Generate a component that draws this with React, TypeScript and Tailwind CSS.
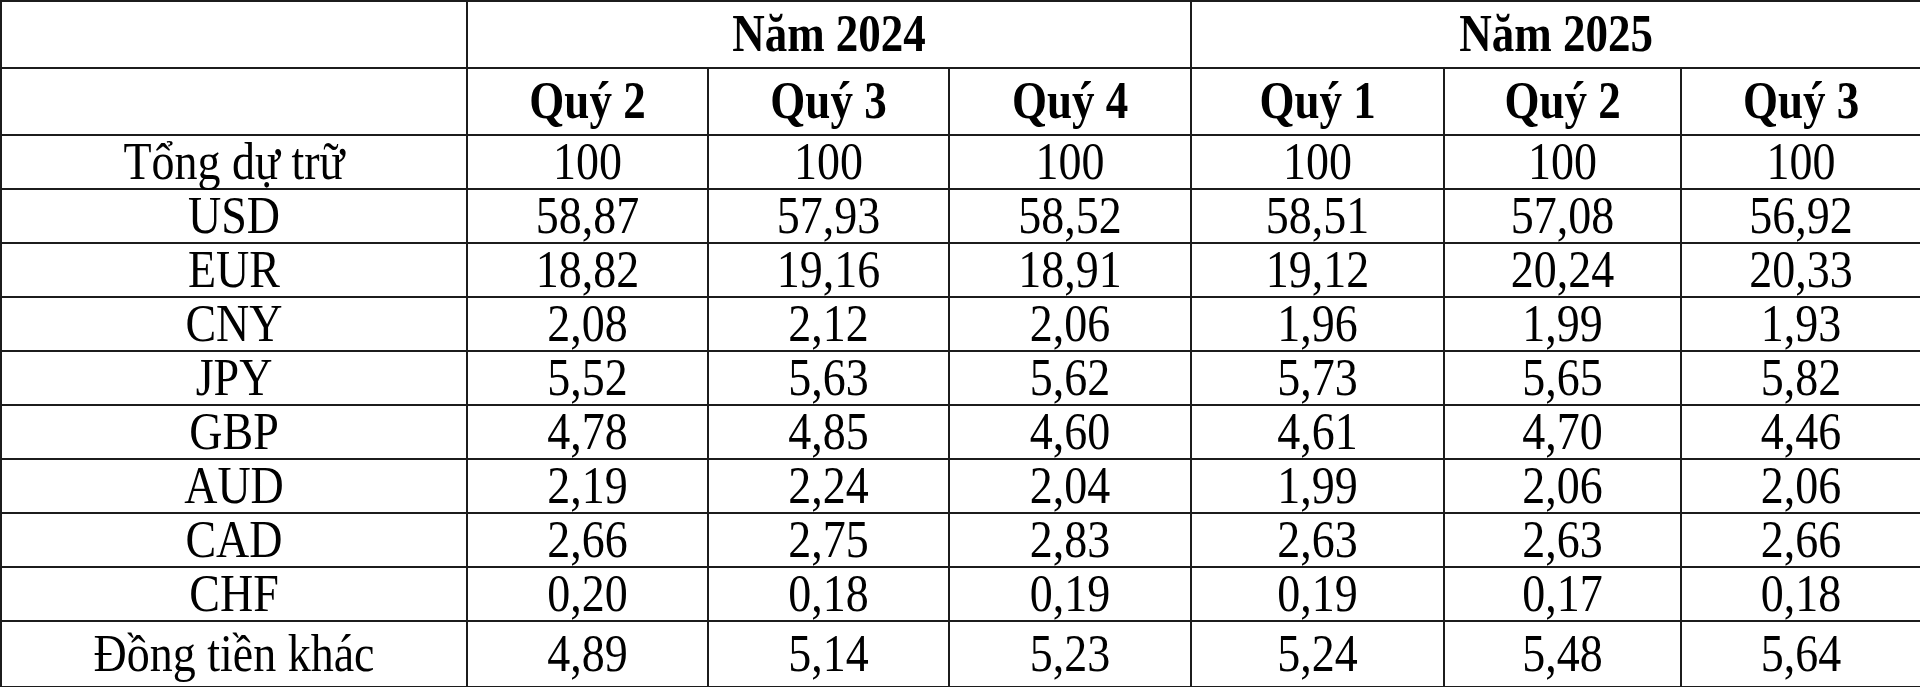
const quarters = [
  { year: "Năm 2024", items: ["Quý 2", "Quý 3", "Quý 4"] },
  { year: "Năm 2025", items: ["Quý 1", "Quý 2", "Quý 3"] },
];

const rows: { label: string; values: string[]; tall?: boolean }[] = [
  { label: "Tổng dự trữ", values: ["100", "100", "100", "100", "100", "100"] },
  { label: "USD", values: ["58,87", "57,93", "58,52", "58,51", "57,08", "56,92"] },
  { label: "EUR", values: ["18,82", "19,16", "18,91", "19,12", "20,24", "20,33"] },
  { label: "CNY", values: ["2,08", "2,12", "2,06", "1,96", "1,99", "1,93"] },
  { label: "JPY", values: ["5,52", "5,63", "5,62", "5,73", "5,65", "5,82"] },
  { label: "GBP", values: ["4,78", "4,85", "4,60", "4,61", "4,70", "4,46"] },
  { label: "AUD", values: ["2,19", "2,24", "2,04", "1,99", "2,06", "2,06"] },
  { label: "CAD", values: ["2,66", "2,75", "2,83", "2,63", "2,63", "2,66"] },
  { label: "CHF", values: ["0,20", "0,18", "0,19", "0,19", "0,17", "0,18"] },
  { label: "Đồng tiền khác", values: ["4,89", "5,14", "5,23", "5,24", "5,48", "5,64"], tall: true },
];

const cell = "border-2 border-[#1c1c1c] text-center p-0 align-middle";
// the source image is a bit stretched vertically
const stretch = "inline-block scale-y-[1.15]";

const App = () => {
  return (
    <div className="w-[1920px] h-[687px] bg-white text-black font-['Liberation_Serif','Times_New_Roman',serif]">
      <table className="w-[1920px] table-fixed border-collapse">
        <colgroup>
          <col className="w-[466px]" />
          <col className="w-[241px]" />
          <col className="w-[241px]" />
          <col className="w-[242px]" />
          <col className="w-[253px]" />
          <col className="w-[237px]" />
          <col className="w-[240px]" />
        </colgroup>
        <thead>
          <tr className="h-[67px]">
            <th className={cell}></th>
            {quarters.map((q) => (
              <th key={q.year} colSpan={3} className={`${cell} text-[45px] font-bold leading-none`}>
                <span className={stretch}>{q.year}</span>
              </th>
            ))}
          </tr>
          <tr className="h-[67px]">
            <th className={cell}></th>
            {quarters.flatMap((q) =>
              q.items.map((it) => (
                <th key={q.year + it} className={`${cell} text-[45px] font-bold leading-none`}>
                  <span className={stretch}>{it}</span>
                </th>
              ))
            )}
          </tr>
        </thead>
        <tbody>
          {rows.map((r) => (
            <tr key={r.label} className={r.tall ? "h-[66px]" : "h-[54px]"}>
              <td className={`${cell} text-[46px] leading-none`}>
                <span className={stretch}>{r.label}</span>
              </td>
              {r.values.map((v, i) => (
                <td key={i} className={`${cell} text-[46px] leading-none`}>
                  <span className={stretch}>{v}</span>
                </td>
              ))}
            </tr>
          ))}
        </tbody>
      </table>
    </div>
  );
};

export default App;
